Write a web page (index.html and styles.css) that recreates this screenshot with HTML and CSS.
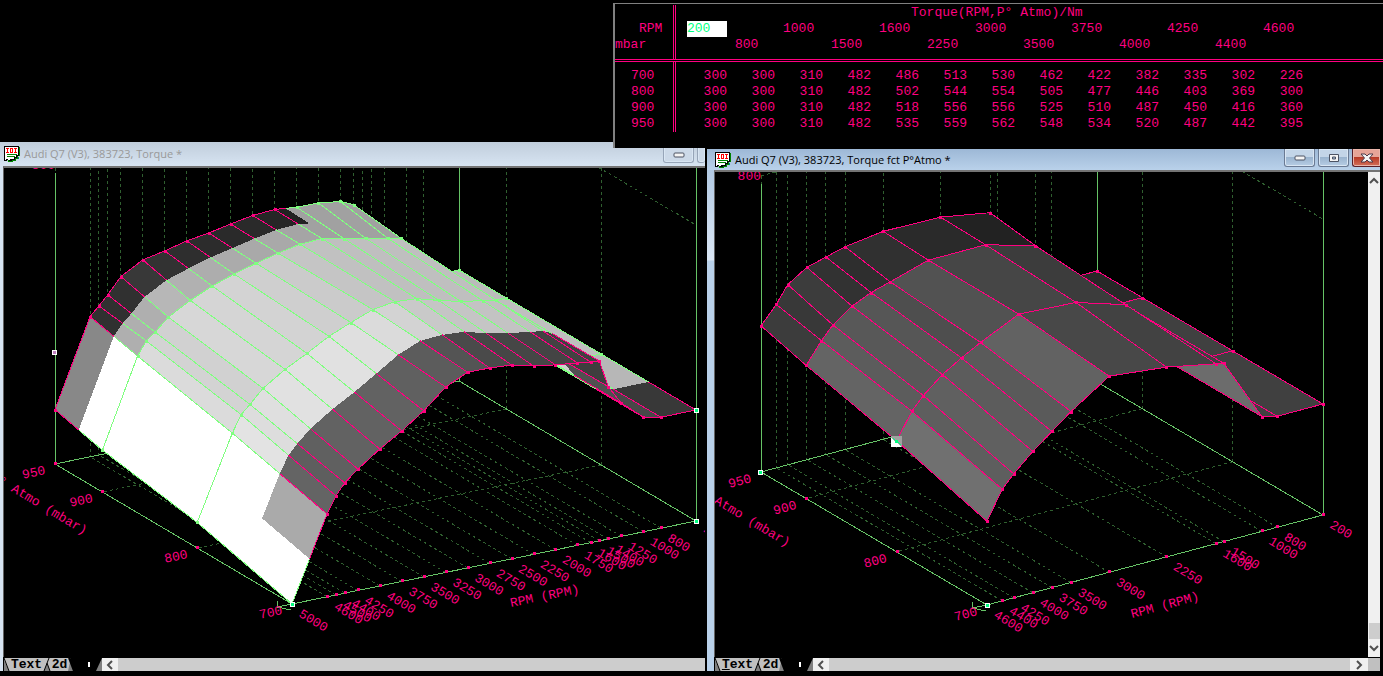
FILE: index.html
```
<!DOCTYPE html>
<html lang="en">

<head>
  <meta charset="utf-8">
  <title>Audi Q7 (V3), 383723</title>
  <link rel="stylesheet" href="styles.css">
</head>

<body>
  <svg class="defs" aria-hidden="true">
    <symbol id="icon-doc" viewBox="0 0 16 16">
      <path d="M2 1h14v9h-2v3h-2v2H9v1H4z" fill="#008000" />
      <path d="M0 0h15v10h-2v2h-2v2H8v1H5v-1H3v1H0z" fill="#000" />
      <path d="M1 1h13v8h-2v2h-2v2H6v1H4v-1H2v1H1z" fill="#fff" />
      <path d="M2 2h3v1H4v3h1v1H2V6h1V3H2zM6 2h3v5H6zM10 2h3v1h-1v3h1v1h-3V6h1V3h-1z" fill="#f00" />
      <path d="M7 3h1v3H7z" fill="#fff" />
      <path d="M3 8h10v1H3zM3 10h8v1H3z" fill="#008000" />
      <path d="M14 11h1v2h-1z" fill="#008080" />
    </symbol>
    <symbol id="icon-min" viewBox="0 0 12 8">
      <rect x="1" y="2" width="10" height="4" rx="1" fill="#f4f4f4" stroke="#4c5363" />
    </symbol>
    <symbol id="icon-max" viewBox="0 0 12 10">
      <path d="M1.500 1.500h9v7h-9z" fill="#f4f4f4" stroke="#4c5363" />
      <path d="M4.500 4h3v2h-3z" fill="#a9c0d8" stroke="#4c5363" />
    </symbol>
    <symbol id="icon-close" viewBox="0 0 14 10">
      <path d="M1 1h4l2 2 2-2h4L9.500 5 13 9H9L7 7 5 9H1l3.500-4z" fill="#f4f4f4" stroke="#4c3a48" />
    </symbol>
    <symbol id="icon-arrow" viewBox="0 0 10 10">
      <path d="M7 1L3 5l4 4" fill="none" stroke="#505050" stroke-width="2" />
    </symbol>
    <symbol id="tab-start" viewBox="0 0 6 13">
      <path d="M0 0h6v13H0z" fill="#c0c0c0" />
      <path d="M0 2v11h5z" fill="#808080" />
      <path d="M0 0l5 13" stroke="#000" stroke-width="1" />
    </symbol>
    <symbol id="tab-mid" viewBox="0 0 8 13">
      <path d="M0 0h8v13H0z" fill="#c0c0c0" />
      <path d="M4 5l3 8H1z" fill="#808080" />
      <path d="M6 0L1 13M4 5l3 8" stroke="#000" stroke-width="1" />
    </symbol>
    <symbol id="tab-active" viewBox="0 0 8 13">
      <path d="M0 0h3l5 13H0z" fill="#c0c0c0" />
      <path d="M2 4l4 9H0z" fill="#808080" />
      <path d="M1 0l5 13M3 0l5 13" stroke="#000" stroke-width="2" />
    </symbol>
    <symbol id="tab-end" viewBox="0 0 6 13">
      <path d="M6 0v13H0z" fill="#808080" />
    </symbol>
  </svg>

  <main class="desktop">
    <section class="window window-left">
      <header class="titlebar">
        <svg class="doc-icon"><use href="#icon-doc" /></svg>
        <h2>Audi Q7 (V3), 383723, Torque *</h2>
        <div class="controls">
          <button class="control" aria-label="Minimize"><svg width="12" height="8"><use href="#icon-min" /></svg></button>
          <button class="control control-cut" aria-label="Maximize"></button>
        </div>
      </header>
      <div class="client">
        <svg class="chart" id="chart-torque"></svg>
      </div>
      <footer class="bottom">
        <nav class="tabs">
          <svg width="6" height="13"><use href="#tab-start" /></svg>
          <button class="tab">Text</button>
          <svg width="8" height="13"><use href="#tab-mid" /></svg>
          <button class="tab tab-short">2d</button>
          <svg width="8" height="13"><use href="#tab-active" /></svg>
          <button class="tab tab-on" aria-label="3d"><span class="caret"></span></button>
          <svg width="6" height="13"><use href="#tab-end" /></svg>
        </nav>
        <div class="hscroll">
          <button class="arrow" aria-label="Scroll left"><svg width="10" height="10"><use href="#icon-arrow" /></svg></button>
        </div>
      </footer>
    </section>

    <section class="window window-right">
      <header class="titlebar">
        <svg class="doc-icon"><use href="#icon-doc" /></svg>
        <h2>Audi Q7 (V3), 383723, Torque fct P°Atmo *</h2>
        <div class="controls">
          <button class="control" aria-label="Minimize"><svg width="12" height="8"><use href="#icon-min" /></svg></button>
          <button class="control" aria-label="Maximize"><svg width="12" height="10"><use href="#icon-max" /></svg></button>
          <button class="control control-close" aria-label="Close"><svg width="14" height="10"><use href="#icon-close" /></svg></button>
        </div>
      </header>
      <div class="client">
        <svg class="chart" id="chart-atmo"></svg>
        <div class="vscroll">
          <button class="arrow up" aria-label="Scroll up"><svg width="10" height="10"><use href="#icon-arrow" /></svg></button>
          <div class="thumb"></div>
          <button class="arrow down" aria-label="Scroll down"><svg width="10" height="10"><use href="#icon-arrow" /></svg></button>
        </div>
      </div>
      <footer class="bottom">
        <nav class="tabs">
          <svg width="6" height="13"><use href="#tab-start" /></svg>
          <button class="tab"><u>T</u>ext</button>
          <svg width="8" height="13"><use href="#tab-mid" /></svg>
          <button class="tab tab-short">2d</button>
          <svg width="8" height="13"><use href="#tab-active" /></svg>
          <button class="tab tab-on" aria-label="3d"><span class="caret"></span></button>
          <svg width="6" height="13"><use href="#tab-end" /></svg>
        </nav>
        <div class="hscroll">
          <button class="arrow" aria-label="Scroll left"><svg width="10" height="10"><use href="#icon-arrow" /></svg></button>
          <button class="arrow right" aria-label="Scroll right"><svg width="10" height="10"><use href="#icon-arrow" /></svg></button>
        </div>
        <div class="corner"></div>
      </footer>
    </section>

    <section class="table-window">
      <table class="map">
        <colgroup>
          <col class="col-axis">
          <col class="col-value" span="13">
          <col>
        </colgroup>
        <thead>
          <tr>
            <td class="axis"></td>
            <th class="title" colspan="13">Torque(RPM,P° Atmo)/Nm</th>
            <td></td>
          </tr>
          <tr>
            <th class="axis axis-rpm">RPM</th>
            <th><span class="cursor">200</span></th><th></th><th>1000</th><th></th><th>1600</th><th></th><th>3000</th>
            <th></th><th>3750</th><th></th><th>4250</th><th></th><th>4600</th>
            <td></td>
          </tr>
          <tr class="last">
            <th class="axis axis-mbar">mbar</th>
            <th></th><th>800</th><th></th><th>1500</th><th></th><th>2250</th><th></th>
            <th>3500</th><th></th><th>4000</th><th></th><th>4400</th><th></th>
            <td></td>
          </tr>
        </thead>
        <tbody>
          <tr class="first">
            <th class="axis">700</th>
            <td>300</td><td>300</td><td>310</td><td>482</td><td>486</td><td>513</td><td>530</td>
            <td>462</td><td>422</td><td>382</td><td>335</td><td>302</td><td>226</td>
          </tr>
          <tr>
            <th class="axis">800</th>
            <td>300</td><td>300</td><td>310</td><td>482</td><td>502</td><td>544</td><td>554</td>
            <td>505</td><td>477</td><td>446</td><td>403</td><td>369</td><td>300</td>
          </tr>
          <tr>
            <th class="axis">900</th>
            <td>300</td><td>300</td><td>310</td><td>482</td><td>518</td><td>556</td><td>556</td>
            <td>525</td><td>510</td><td>487</td><td>450</td><td>416</td><td>360</td>
          </tr>
          <tr>
            <th class="axis">950</th>
            <td>300</td><td>300</td><td>310</td><td>482</td><td>535</td><td>559</td><td>562</td>
            <td>548</td><td>534</td><td>520</td><td>487</td><td>442</td><td>395</td>
          </tr>
        </tbody>
      </table>
    </section>
  </main>

  <script src="charts.js"></script>
</body>

</html>
```
FILE: styles.css
```
* {
  box-sizing: border-box;
}

body {
  margin: 0;
  background: #000;
  font-family: "Open Sans", "Noto Sans", sans-serif;
  font-size: 11px;
}

button {
  margin: 0;
  padding: 0;
  border: none;
  font: inherit;
}

.defs {
  display: none;
}

.desktop {
  position: relative;
  height: 100vh;
  overflow: hidden;
}

/* Windows */
.window {
  position: absolute;
  bottom: 5px;
  display: flex;
  flex-direction: column;
}

.window-left {
  left: 0;
  right: 678px;
  top: 142px;
  padding-left: 3px;
  background: #d7e4f2;
}

.window-right {
  left: 707px;
  right: 3px;
  top: 149px;
  padding-left: 7px;
  background: linear-gradient(#a9c3df 0, #dbe7f5 111px, #b9d1ea 112px);
}

.titlebar {
  display: flex;
  align-items: center;
  height: 24px;
  background: linear-gradient(#c0cddb, #d7e4f2);
}

.window-left .titlebar {
  margin-left: -3px;
  padding-left: 4px;
  color: #999;
}

.window-right .titlebar {
  height: 21px;
  margin-left: -7px;
  padding-left: 8px;
  background: linear-gradient(#9db8d6, #b9d1ea);
  color: #000;
}

.titlebar h2 {
  flex: 1;
  margin: 0 0 0 4px;
  font-size: 11px;
  font-weight: 400;
  line-height: 16px;
  white-space: nowrap;
}

.doc-icon {
  width: 16px;
  height: 16px;
}

.controls {
  display: flex;
  gap: 3px;
  align-self: flex-start;
  height: 18px;
  overflow: hidden;
}

.window-left .controls {
  height: 21px;
}

.control {
  display: flex;
  align-items: center;
  justify-content: center;
  width: 31px;
  border: 1px solid #6a7a93;
  border-top: none;
  border-radius: 0 0 3px 3px;
  background: linear-gradient(#c3d5e8 50%, #9ab4cf 50%, #b7cde4);
  box-shadow: inset 0 0 0 1px #d9e6f3;
}

.window-left .control {
  padding-top: 6px;
  border-color: #97a5b8;
  background: #ccd9e8;
}

.window-left .control-cut {
  width: 8px;
  border-right: none;
}

.window-right .control-close {
  width: 28px;
  border-color: #5a1f28;
  border-right: none;
  border-radius: 0 0 0 3px;
  background: linear-gradient(#e6a497 50%, #b83a26 50%, #d3705a);
  box-shadow: inset 0 0 0 1px #eab5aa;
}

.client {
  flex: 1;
  display: flex;
  min-height: 0;
  border-top: 2px solid #737373;
  border-left: 1px solid #646464;
  background: #000;
}

.chart {
  flex: 1;
  min-width: 0;
  height: 100%;
}

/* Bottom bar with the view tabs and the scroll bar */
.bottom {
  display: flex;
  height: 14px;
  padding-top: 1px;
  padding-left: 1px;
  background: #000;
}

.tabs {
  display: flex;
  width: 98px;
}

.tab {
  width: 33px;
  height: 13px;
  background: #c0c0c0;
  color: #000;
  font: bold 13px/13px "Liberation Mono", monospace;
}

.tab-short {
  width: 17px;
}

.tab-on {
  flex: 1;
  display: flex;
  align-items: center;
  justify-content: center;
  padding-left: 6px;
  background: #000;
}

.caret {
  width: 2px;
  height: 5px;
  background: #fff;
}

.hscroll {
  flex: 1;
  display: flex;
  background: #cdcdcd;
}

.arrow {
  display: flex;
  align-items: center;
  justify-content: center;
  width: 16px;
  background: #f0f0f0;
}

.right {
  width: 18px;
  margin-left: auto;
}

.right svg {
  transform: rotate(180deg);
}

.vscroll {
  display: flex;
  flex-direction: column;
  width: 12px;
  background: #f0f0f0;
}

.vscroll .arrow {
  width: 12px;
  height: 18px;
}

.up svg {
  transform: rotate(90deg);
}

.down svg {
  transform: rotate(270deg);
}

.thumb {
  height: 16px;
  margin-top: auto;
  margin-left: 1px;
  background: #cdcdcd;
}

.corner {
  width: 12px;
  background: #c0c0c0;
}

/* Map table */
.table-window {
  position: absolute;
  left: 613px;
  right: 0;
  top: 3px;
  padding-top: 1px;
  padding-bottom: 16px;
  border-top: 1px solid #808080;
  border-left: 2px solid #808080;
  background: #000;
}

.map {
  width: 100%;
  table-layout: fixed;
  border-collapse: separate;
  border-spacing: 0;
  color: #ff0080;
  font: 13px/16px "Liberation Mono", monospace;
}

.col-axis {
  width: 72px;
}

.col-value {
  width: 48px;
}

.map th,
.map td {
  height: 16px;
  padding: 0;
  font-weight: 400;
  text-align: left;
  white-space: nowrap;
}

.map tbody td {
  padding-right: 8px;
  text-align: right;
}

/* the double line runs inside the first column, 10px before the values */
.map .axis {
  padding-left: 16px;
  background: linear-gradient(#ff0080, #ff0080) 58px 0 / 1px 100% no-repeat,
    linear-gradient(#ff0080, #ff0080) 60px 0 / 1px 100% no-repeat;
}

.map .axis-rpm {
  padding-left: 24px;
}

.map .axis-mbar {
  padding-left: 0;
}

.map .title {
  padding-left: 224px;
}

.map .last th,
.map .last td {
  padding-bottom: 6px;
  border-bottom: 3px double #ff0080;
}

.map .first th,
.map .first td {
  padding-top: 6px;
}

.cursor {
  display: block;
  width: 40px;
  background: #fff;
  color: #00ff80;
}

/* 3d charts */
.chart line,
.chart path,
.chart polygon,
.chart rect {
  shape-rendering: crispEdges;
}

.chart text {
  fill: #ff0080;
  font: 13px "Liberation Mono", monospace;
}

.axis-line {
  stroke: #66c266;
  fill: none;
}

.grid-line {
  stroke: #2f5f2f;
  stroke-dasharray: 3 3;
}

.mesh {
  stroke: #ff0080;
}

.mesh-on {
  stroke: #80ff80;
}

.dot {
  fill: #ff0080;
}

.dot-on {
  fill: #80ff80;
}

.handle {
  fill: #00ff80;
  stroke: #fff;
}
```
FILE: charts.js
```
var SVG = "http://www.w3.org/2000/svg";

// Each chart is a map of torque (Nm) over RPM and pressure.
// origin is the front corner (lowest pressure, highest RPM); xAxis and yAxis are the floor edges.
var torque = {
  id: "chart-torque",
  origin: [288, 436],
  xAxis: [404, -83],
  yAxis: [-237, -140],
  scale: 0.37,
  top: -3,
  axisTop: 5,
  rpm: [400, 800, 1000, 1250, 1400, 1500, 1600, 1750, 2000, 2250, 2500, 2750, 3000, 3250, 3500, 3750, 4000, 4250, 4400, 4500, 4600, 5000],
  mbar: [700, 800, 900, 950],
  values: [
    [300, 300, 310, 360, 412, 486, 488, 493, 500, 509, 524, 528, 529, 501, 449, 407, 370, 328, 298, 268, 224, 0],
    [300, 300, 310, 360, 410, 484, 504, 510, 520, 535, 552, 556, 547, 524, 499, 465, 434, 395, 359, 336, 291, 69],
    [300, 300, 310, 360, 410, 482, 520, 527, 539, 551, 563, 560, 548, 533, 516, 496, 469, 436, 403, 384, 348, 113],
    [300, 300, 310, 360, 410, 482, 535, 551, 559, 560, 566, 562, 551, 539, 530, 515, 503, 470, 428, 403, 379, 147]
  ],
  shades: [
    [62, 56, 72, 80, 80, 62, 64, 66, 68, 70, 70, 74, 84, 92, 96, 98, 98, 98, 96, 94, 100, 170],
    [64, 64, 80, 80, 80, 64, 64, 64, 64, 64, 64, 66, 70, 76, 80, 84, 86, 88, 82, 84, 92, 170],
    [36, 60, 60, 60, 60, 34, 34, 34, 34, 34, 34, 38, 42, 42, 44, 46, 50, 56, 48, 48, 48, 136]
  ],
  selected: function (rpm, mbar) {
    if (mbar === 700) return rpm === 5000;
    if (mbar === 950) return rpm <= 2250;
    return true;
  },
  handles: [[50, 184, "#c080c0"], [288, 436], [692, 242], [692, 353]],
  rpmTitle: [507, 439],
  mbarTitle: [80, 367]
};

var atmo = {
  id: "chart-atmo",
  origin: [272, 433],
  xAxis: [336, -90],
  yAxis: [-226, -133],
  scale: 0.37,
  top: 4,
  axisTop: 12,
  rpm: [200, 800, 1000, 1500, 1600, 2250, 3000, 3500, 3750, 4000, 4250, 4400, 4600],
  mbar: [700, 800, 900, 950],
  values: [
    [300, 300, 310, 482, 486, 513, 530, 462, 422, 382, 335, 302, 226],
    [300, 300, 310, 482, 502, 544, 554, 505, 477, 446, 403, 369, 300],
    [300, 300, 310, 482, 518, 556, 556, 525, 510, 487, 450, 416, 360],
    [300, 300, 310, 482, 535, 559, 562, 548, 534, 520, 487, 442, 395]
  ],
  shades: [
    [64, 64, 108, 64, 66, 72, 98, 90, 92, 96, 94, 112],
    [64, 64, 90, 62, 60, 70, 82, 78, 86, 88, 92, 100],
    [40, 40, 60, 34, 34, 42, 48, 46, 50, 60, 56, 60]
  ],
  selected: function () { return false; },
  handles: [[45, 300], [272, 433]],
  rpmTitle: [417, 446],
  mbarTitle: [72, 375]
};

function add(parent, name, attrs, text) {
  var el = document.createElementNS(SVG, name);
  for (var key in attrs) el.setAttribute(key, attrs[key]);
  if (text !== undefined) el.textContent = text;
  parent.appendChild(el);
  return el;
}

function drawChart(c) {
  var svg = document.getElementById(c.id);
  var lastRpm = c.rpm.length - 1;
  var minRpm = c.rpm[0], maxRpm = c.rpm[lastRpm];

  function project(rpm, mbar, nm) {
    var u = (maxRpm - rpm) / (maxRpm - minRpm);
    var v = (mbar - 700) / 250;
    return [
      c.origin[0] + c.xAxis[0] * u + c.yAxis[0] * v,
      c.origin[1] + c.xAxis[1] * u + c.yAxis[1] * v - nm * c.scale
    ];
  }

  function mid(a, b) {
    return [(a[0] + b[0]) / 2, (a[1] + b[1]) / 2];
  }

  function line(a, b, cls) {
    add(svg, "line", { x1: a[0], y1: a[1], x2: b[0], y2: b[1], "class": cls });
  }

  function dot(p, cls) {
    add(svg, "rect", { x: Math.round(p[0]) - 1, y: Math.round(p[1]) - 1, width: 3, height: 3, "class": cls });
  }

  function label(p, angle, text, anchor) {
    add(svg, "text", {
      transform: "translate(" + p[0] + " " + p[1] + ") rotate(" + angle + ")",
      "text-anchor": anchor
    }, text);
  }

  // floor and back walls
  c.rpm.forEach(function (rpm) {
    line(project(rpm, 700, 0), project(rpm, 950, 0), "grid-line");
    line(project(rpm, 950, 800), project(rpm, 950, 0), "grid-line");
  });
  c.mbar.forEach(function (mbar) {
    line(project(minRpm, mbar, 0), project(maxRpm, mbar, 0), "grid-line");
    line(project(minRpm, mbar, 900), project(minRpm, mbar, 0), "grid-line");
  });
  line(project(maxRpm, 950, 800), project(minRpm, 950, 800), "grid-line");
  line(project(minRpm, 950, 800), project(minRpm, 700, 800), "grid-line");

  // axes
  var front = project(maxRpm, 700, 0);
  var left = project(maxRpm, 950, 0);
  var right = project(minRpm, 700, 0);
  var back = project(minRpm, 950, 0);
  line(left, front, "axis-line");
  line(front, right, "axis-line");
  line(right, back, "axis-line");
  line(back, left, "axis-line");
  line([left[0], c.axisTop], left, "axis-line");
  line([right[0], 0], right, "axis-line");
  line([back[0], 0], back, "axis-line");
  add(svg, "path", {
    d: "M" + front[0] + " " + front[1] + "l-15 3m0 -6l0 6l14 3",
    "class": "axis-line"
  });

  // surface, drawn from the back corner to the front one
  for (var i = 0; i < lastRpm; i++) {
    for (var j = 2; j >= 0; j--) {
      var corners = [[i, j], [i + 1, j], [i + 1, j + 1], [i, j + 1]].map(function (k) {
        return {
          p: project(c.rpm[k[0]], c.mbar[k[1]], c.values[k[1]][k[0]]),
          on: c.selected(c.rpm[k[0]], c.mbar[k[1]])
        };
      });
      var center = mid(mid(corners[0].p, corners[1].p), mid(corners[2].p, corners[3].p));
      var shade = c.shades[j][i + (c.shades[j].length - lastRpm)];
      corners.forEach(function (corner, n) {
        var next = corners[(n + 1) % 4].p;
        var prev = corners[(n + 3) % 4].p;
        var g = corner.on ? Math.min(255, shade + 127) : shade;
        add(svg, "polygon", {
          points: [corner.p, mid(corner.p, next), center, mid(corner.p, prev)].join(" "),
          fill: "rgb(" + g + "," + g + "," + g + ")"
        });
      });
      corners.forEach(function (corner, n) {
        var cls = corner.on ? "mesh-on" : "mesh";
        line(corner.p, mid(corner.p, corners[(n + 1) % 4].p), cls);
        line(corner.p, mid(corner.p, corners[(n + 3) % 4].p), cls);
        dot(corner.p, corner.on ? "dot-on" : "dot");
      });
    }
  }

  // ticks and labels
  var rpmAngle = Math.atan2(c.xAxis[1], c.xAxis[0]) * 180 / Math.PI;
  c.rpm.forEach(function (rpm) {
    var p = project(rpm, 700, 0);
    dot([p[0], p[1] - 1], "dot");
    label([p[0] + 6, p[1] + 12], 31, rpm, "start");
  });
  c.mbar.forEach(function (mbar) {
    var p = project(maxRpm, mbar, 0);
    dot([p[0], p[1] - 1], "dot");
    label([p[0] - 9, p[1] + 10], rpmAngle, mbar, "end");
  });
  label([left[0], c.top + 4], 0, "800", "end");
  label(c.rpmTitle, rpmAngle, "RPM (RPM)", "start");
  label(c.mbarTitle, 31, "P° Atmo (mbar)", "end");

  c.handles.forEach(function (h) {
    add(svg, "rect", { x: h[0] - 2, y: h[1] - 2, width: 4, height: 4, fill: h[2] || "#00ff80", stroke: "#fff" });
  });
}

drawChart(torque);
drawChart(atmo);

// cursor cell on the pressure map
var atmoSvg = document.getElementById("chart-atmo");
add(atmoSvg, "path", { d: "M176 264h11v11h-11z", fill: "#a0a0a0" });
add(atmoSvg, "path", { d: "M176 266l11 9h-11z", fill: "#fff" });
add(atmoSvg, "path", { d: "M178 266l8 7", stroke: "#00ff80" });
add(atmoSvg, "path", { d: "M180 268h3v3h-3z", fill: "#00ff80" });
```
